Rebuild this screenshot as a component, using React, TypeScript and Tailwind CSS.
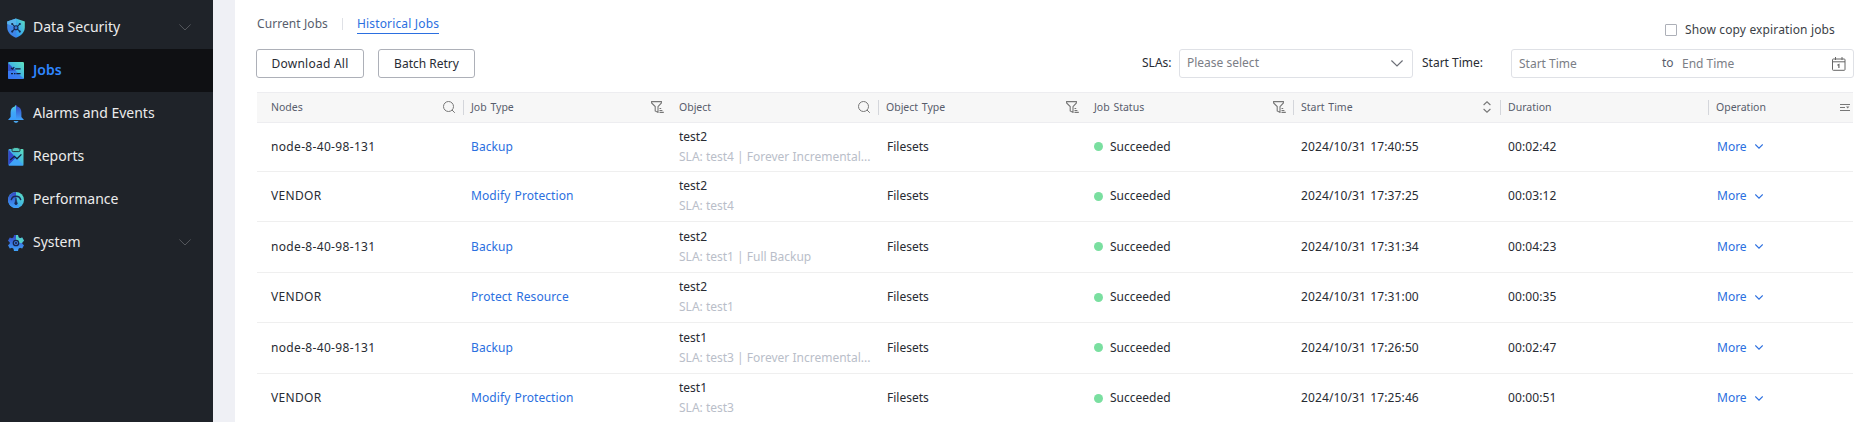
import React from "react";

type Kind = "search" | "filter" | "sort" | "columns" | null;

const Chevron = ({ className, width = 1 }: { className: string; width?: number }) => (
  <svg viewBox="0 0 12 7" fill="none" stroke="currentColor" strokeWidth={width} className={className}>
    <path d="M.4.5 6 6 11.6.5" />
  </svg>
);

const Gradients = () => (
  <svg className="absolute size-0">
    <defs>
      <linearGradient id="teal" x1="1" y1="0" x2="0" y2="1">
        <stop offset="0" stopColor="#5fe3bd" />
        <stop offset=".55" stopColor="#3fb2e6" />
        <stop offset="1" stopColor="#2f86f6" />
      </linearGradient>
      <linearGradient id="blue" x1="0" y1="0" x2="0" y2="1">
        <stop offset="0" stopColor="#3546c4" />
        <stop offset="1" stopColor="#40a4fb" />
      </linearGradient>
      <linearGradient id="sky" x1="0" y1="0" x2="0" y2="1">
        <stop offset="0" stopColor="#56cfe0" />
        <stop offset=".5" stopColor="#3fa6f8" />
        <stop offset="1" stopColor="#3b9dfc" />
      </linearGradient>
    </defs>
  </svg>
);

const ShieldIcon = () => (
  <svg viewBox="0 0 18 20" className="h-5 w-[18px]">
    <path d="M9 .4 17.8 3.4V9.6C17.8 14.4 14 18 9 19.8Z" fill="url(#teal)" />
    <path d="M9 .4.2 3.4V9.6C.2 14.4 4 18 9 19.8Z" fill="#3f86e8" />
    <path d="M9 .4.2 3.4V6L9 9Z" fill="#58b4ea" />
    <g stroke="#16294f" strokeWidth="1.1" fill="none">
      <path d="M5.2 6.2 12.8 13.4M12.8 6.2 5.2 13.4" />
      <circle cx="9" cy="9.8" r="2" fill="#3a78d8" />
    </g>
    <g fill="#16294f">
      <circle cx="5.2" cy="6" r="1.1" />
      <circle cx="12.8" cy="6" r="1.1" />
      <circle cx="5.2" cy="13.6" r="1.1" />
      <circle cx="12.8" cy="13.6" r="1.1" />
    </g>
  </svg>
);

const JobsIcon = () => (
  <svg viewBox="0 0 16 17" className="h-[17px] w-4">
    <rect width="16" height="17" rx="1.2" fill="url(#teal)" />
    <path d="M0 1.2 16 17H1.2A1.2 1.2 0 0 1 0 15.8Z" fill="#3a6ff0" opacity=".75" />
    <path d="M0 1 8 8.5 0 9Z" fill="#3040b8" opacity=".7" />
    <path d="M3 5.8 4.4 7.2 6.3 5.2M7.2 6.9H12.6M3 11.7H5M6 11.7H7.5M8.4 11.7H12.6" stroke="#101c3c" strokeWidth="1.2" fill="none" />
  </svg>
);

const BellIcon = () => (
  <svg viewBox="0 0 16 18" className="h-[18px] w-4">
    <path d="M8 .2C8.8.2 9.2.8 9.2 1.5 12 2.2 13.4 4.3 13.4 7.2V12L16 15H8Z" fill="url(#blue)" />
    <path d="M8 .2C7.2.2 6.8.8 6.8 1.5 4 2.2 2.6 4.3 2.6 7.2V12L0 15H8Z" fill="url(#sky)" />
    <path d="M5.6 16H10.4C10.2 17.2 9.2 17.8 8 17.8S5.8 17.2 5.6 16Z" fill="#4aa8f0" />
  </svg>
);

const ReportIcon = () => (
  <svg viewBox="0 0 16 19" className="h-[19px] w-4">
    <rect x=".5" y="2" width="15" height="16.6" rx="1" fill="url(#teal)" />
    <path d="M.5 2.6 8 11 .5 18Z" fill="#3448cc" />
    <path d="M.5 18.6 8 10.6 15.5 18.6Z" fill="#40a4f8" />
    <path d="M4 1H5.8C6.2.2 9.8.2 10.2 1H12V3.4Q12 4.6 10.8 4.6H5.2Q4 4.6 4 3.4Z" fill="#54c9bb" stroke="#1f2329" strokeWidth=".9" />
    <path d="M2.2 13 6.4 9.3 9 11.8 13.4 7.4" stroke="#13233c" strokeWidth="1.3" fill="none" />
  </svg>
);

const GaugeIcon = () => (
  <svg viewBox="0 0 16 16" className="size-4">
    <circle cx="8" cy="8" r="8" fill="url(#teal)" />
    <path d="M8 0A8 8 0 1 0 11 15.4L8 8Z" fill="url(#blue)" />
    <path d="M3.2 8.2A4.9 4.9 0 0 1 12.8 8.2" stroke="#182b56" strokeWidth="1.4" fill="none" />
    <path d="M8 5.6 8.9 10.2A1.4 1.4 0 1 1 7.1 10.2Z" fill="#182b56" stroke="#182b56" strokeWidth=".5" />
  </svg>
);

const GearIcon = () => (
  <svg viewBox="0 0 16 16" className="size-4">
    <path d="M6 0H10L10.5 2.3 12 3.2 14.2 2.5 16 5.7 14.3 7.2V8.8L16 10.3 14.2 13.5 12 12.8 10.5 13.7 10 16H6L5.5 13.7 4 12.8 1.8 13.5 0 10.3 1.7 8.8V7.2L0 5.7 1.8 2.5 4 3.2 5.5 2.3Z" fill="url(#blue)" />
    <path d="M8 0H10L10.5 2.3 12 3.2 14.2 2.5 16 5.7 14.3 7.2V8L8 8Z" fill="#52cdc9" />
    <circle cx="8" cy="8" r="2.7" fill="#3d78dc" stroke="#17264c" strokeWidth="1.3" />
    <circle cx="8" cy="8" r="1" fill="#17264c" />
  </svg>
);

const HeaderIcon = ({ kind }: { kind: Kind }) => {
  if (kind === "search")
    return (
      <svg viewBox="0 0 12 12" fill="none" stroke="#777777" className="size-3">
        <circle cx="5.5" cy="5.5" r="5" />
        <path d="M9 9 11.8 11.8" />
      </svg>
    );
  if (kind === "filter")
    return (
      <svg viewBox="0 0 13 12" fill="none" stroke="#777777" strokeWidth="1.1" className="-mr-px h-3 w-[13px]">
        <path d="M.6.6H10.4V2L7 5.6V11.4L4.2 10V5.6L.6 2Z" />
        <path d="M8.5 7.5H10.2M8.5 9.5H11.4M8.5 11.4H12.8" />
      </svg>
    );
  if (kind === "sort")
    return (
      <svg viewBox="0 0 8 12" fill="none" stroke="#777777" strokeWidth="1.1" className="mr-px h-3 w-2">
        <path d="M.6 4 4 .8 7.4 4M.6 8 4 11.2 7.4 8" />
      </svg>
    );
  if (kind === "columns")
    return (
      <svg viewBox="0 0 10 7" fill="none" stroke="#777777" className="mr-[-5px] h-[7px] w-2.5">
        <path d="M0 .5H10M0 3.5H5M0 6.5H10" />
        <path d="M6 2.5H9.4L7.7 4.6Z" fill="#777777" stroke="none" />
      </svg>
    );
  return null;
};

const CalendarIcon = () => (
  <svg viewBox="0 0 14 14" fill="none" stroke="#666666" className="h-3.5 w-3.5">
    <rect x=".5" y="2" width="12.5" height="11.3" rx=".8" />
    <path d="M.5 4.8H13M3.5 0V3M10 0V3" />
    <path d="M5.4 8.2 6.9 7.4V11" strokeWidth="1.2" />
  </svg>
);

const nav = [
  { label: "Data Security", icon: <ShieldIcon />, open: true },
  { label: "Jobs", icon: <JobsIcon />, active: true },
  { label: "Alarms and Events", icon: <BellIcon /> },
  { label: "Reports", icon: <ReportIcon /> },
  { label: "Performance", icon: <GaugeIcon /> },
  { label: "System", icon: <GearIcon />, open: true },
];

const GRID = "grid grid-cols-[206px_208px_207px_208px_207px_207px_208px_145px]";

const columns: { label: string; icon: Kind; divider?: boolean }[] = [
  { label: "Nodes", icon: "search" },
  { label: "Job Type", icon: "filter", divider: true },
  { label: "Object", icon: "search" },
  { label: "Object Type", icon: "filter", divider: true },
  { label: "Job Status", icon: "filter" },
  { label: "Start Time", icon: "sort", divider: true },
  { label: "Duration", icon: null, divider: true },
  { label: "Operation", icon: "columns", divider: true },
];

const rows = [
  { node: "node-8-40-98-131", type: "Backup", object: "test2", sla: "SLA: test4 | Forever Incremental...", start: "2024/10/31 17:40:55", duration: "00:02:42", h: "h-[49px]" },
  { node: "VENDOR", type: "Modify Protection", object: "test2", sla: "SLA: test4", start: "2024/10/31 17:37:25", duration: "00:03:12", h: "h-[50px]" },
  { node: "node-8-40-98-131", type: "Backup", object: "test2", sla: "SLA: test1 | Full Backup", start: "2024/10/31 17:31:34", duration: "00:04:23", h: "h-[51px]" },
  { node: "VENDOR", type: "Protect Resource", object: "test2", sla: "SLA: test1", start: "2024/10/31 17:31:00", duration: "00:00:35", h: "h-[50px]" },
  { node: "node-8-40-98-131", type: "Backup", object: "test1", sla: "SLA: test3 | Forever Incremental...", start: "2024/10/31 17:26:50", duration: "00:02:47", h: "h-[51px]" },
  { node: "VENDOR", type: "Modify Protection", object: "test1", sla: "SLA: test3", start: "2024/10/31 17:25:46", duration: "00:00:51", h: "h-[50px]" },
];

const Sidebar = () => (
  <nav className="h-full w-[213px] shrink-0 bg-[#1f2329] pt-1.5">
    {nav.map((n) => (
      <div key={n.label} className={`flex h-[43px] items-center pr-[22px] pl-[7px] text-sm ${n.active ? "bg-[#0f1013] font-semibold text-[#2e86ff]" : "text-[#ececec]"}`}>
        <span className="flex w-[26px] items-center">
          <span className="flex w-[18px] items-center justify-center">{n.icon}</span>
        </span>
        <span className="flex-1 pb-0.5">{n.label}</span>
        {n.open && <Chevron className="h-[7px] w-3 text-[#55585d]" />}
      </div>
    ))}
  </nav>
);

const Toolbar = () => (
  <header className="flex h-[92px] justify-between">
    <div>
      <div className="flex h-[34px] items-end">
        <span className="h-[18px] tracking-[.08px] text-[#575d6c]">Current Jobs</span>
        <span className="mr-3.5 mb-1 ml-3.5 h-3 w-px bg-[#dfe1e6]" />
        <span className="h-[18px] border-b border-[#2b6fe0] tracking-[.16px] text-[#2b6fe0]">Historical Jobs</span>
      </div>
      <div className="mt-[15px] -ml-px flex gap-3.5">
        <button className="h-[29px] w-[108px] rounded-[3px] border border-[#adb0b8] tracking-[.25px] text-[#282b33]">Download All</button>
        <button className="h-[29px] w-[97px] rounded-[3px] border border-[#adb0b8] text-[#282b33]">Batch Retry</button>
      </div>
    </div>
    <div className="-mr-px">
      <label className="flex h-[49px] items-center justify-end gap-2 pt-[11px] pr-[19px] tracking-[.14px] text-[#3c3f47]">
        <span className="size-3 rounded-[1px] border border-[#adb0b8]" />
        Show copy expiration jobs
      </label>
      <div className="flex h-[29px] items-center">
        <span className="w-[37px] pb-px text-[#282b33]">SLAs:</span>
        <div className="flex h-[29px] w-[234px] items-center justify-between rounded-[3px] border border-[#dfe1e6] pr-[9px] pl-[7px] text-[#7b7e86]">
          <span className="pb-0.5">Please select</span>
          <Chevron className="h-[7px] w-3 text-[#6c6f77]" width={1.2} />
        </div>
        <span className="w-[98px] pb-0.5 pl-[9px] text-[#282b33]">Start Time:</span>
        <div className="flex h-[29px] w-[343px] items-center rounded-[3px] border border-[#dfe1e6] pl-[7px] text-[#7b7e86]">
          <span className="w-[143px]">Start Time</span>
          <span className="w-5 pb-px text-[#575d6c]">to</span>
          <span className="flex-1">End Time</span>
          <span className="pr-[7px]">
            <CalendarIcon />
          </span>
        </div>
      </div>
    </div>
  </header>
);

const Table = () => (
  <section className="w-[1596px]">
    <div className={`${GRID} h-[31px] border-y border-[#ededf0] bg-[#f7f7f7] pb-px text-[10.5px] text-[#575d6c]`}>
      {columns.map((c, i) => (
        <div key={c.label} className={`flex items-center justify-between pr-2 ${i === 0 ? "pl-3.5" : c.divider ? "" : "pl-2"}`}>
          <span className="flex items-center">
            {c.divider && <span className="mr-[7px] h-[15px] w-px bg-[#d4d6db]" />}
            <span className="pb-px [word-spacing:1px]">{c.label}</span>
          </span>
          <HeaderIcon kind={c.icon} />
        </div>
      ))}
    </div>
    {rows.map((r) => (
      <div key={r.start} className={`${GRID} ${r.h} items-center border-b border-[#efefef] pb-px text-[#282b33]`}>
        <span className="pl-3.5 tracking-[.33px]">{r.node}</span>
        <a className="pl-2 tracking-[.08px] text-[#2b6fe0] [word-spacing:1px]">{r.type}</a>
        <div className="pl-2 leading-5 whitespace-nowrap">
          <div>{r.object}</div>
          <div className="text-[#b9bec9]">{r.sla}</div>
        </div>
        <span className="pl-[9px]">Filesets</span>
        <span className="flex items-center gap-[7px] pl-2">
          <i className="size-[9px] rounded-full bg-[#7adfa0]" />
          Succeeded
        </span>
        <span className="pl-2 tracking-[.12px] [word-spacing:1px]">{r.start}</span>
        <span className="pl-2 tracking-[.12px]">{r.duration}</span>
        <span className="flex items-center gap-2 pl-[9px] text-[#2b6fe0]">
          More
          <Chevron className="h-[5px] w-2" width={1.8} />
        </span>
      </div>
    ))}
  </section>
);

export default function App() {
  return (
    <div className="flex h-[422px] w-[1862px] overflow-hidden bg-[#eff0f5] font-['Noto_Sans',sans-serif]">
      <Gradients />
      <Sidebar />
      <main className="ml-[22px] flex-1 bg-white pr-[9px] pl-[22px] text-xs">
        <Toolbar />
        <Table />
      </main>
    </div>
  );
}
